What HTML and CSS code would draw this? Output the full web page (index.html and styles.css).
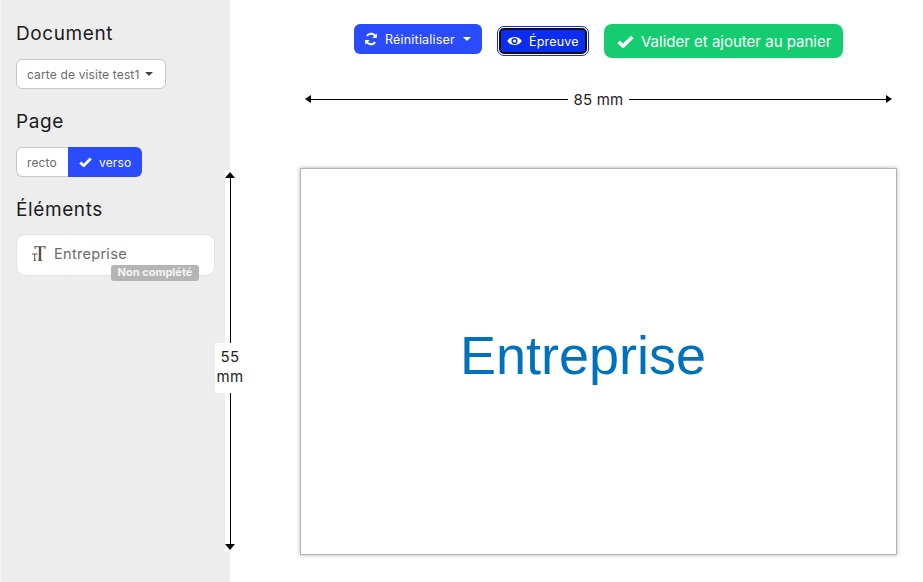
FILE: index.html
```html
<!DOCTYPE html>
<html lang="fr">
<head>
<meta charset="utf-8">
<title>Éditeur</title>
<link rel="stylesheet" href="styles.css">
</head>
<body>
<div class="app">
  <aside class="sidebar">
    <h2 class="heading">Document</h2>
    <button class="select">carte de visite test1<span class="caret caret-dark"></span></button>
    <h2 class="heading">Page</h2>
    <div class="segment">
      <span class="seg-item">recto</span>
      <span class="seg-item seg-active">
        <svg class="ico-check-sm" viewBox="0 0 16 12"><path d="M1.500 6.500 L5.800 10.500 L14.500 1.800" fill="none" stroke="#fff" stroke-width="3.400"/></svg>
        verso
      </span>
    </div>
    <h2 class="heading">Éléments</h2>
    <div class="element-card">
      <svg class="ico-text" viewBox="0 0 14 15">
        <path d="M2.500 0.700 H13.500 M3 0.500 V3 M13 0.500 V3 M6 14.400 H10" fill="none" stroke="#5a5044" stroke-width="1"/>
        <path d="M8 1 V14" stroke="#5a5044" stroke-width="2.400"/>
        <path d="M0 8 H5.500 M2.700 8 V14 M1.500 14.400 H4" fill="none" stroke="#5a5044" stroke-width="1"/>
      </svg>
      <span class="element-name">Entreprise</span>
      <span class="badge">Non complété</span>
    </div>
  </aside>

  <main class="workspace">
    <div class="toolbar">
      <button class="btn btn-blue">
        <svg class="ico-sync" viewBox="0 0 16 16"><path d="M13.500 6.200 A5.800 5.800 0 0 0 3.200 4.400 M2.500 9.800 A5.800 5.800 0 0 0 12.800 11.600" fill="none" stroke="#fff" stroke-width="2.200"/><path d="M14.600 1.400 V6.800 H9.400 Z M1.400 14.600 V9.200 H6.600 Z" fill="#fff"/></svg>
        Réinitialiser<span class="caret caret-light"></span>
      </button>
      <button class="btn btn-proof">
        <svg class="ico-eye" viewBox="0 0 16 12"><path d="M0.300 6 C3 0.400 13 0.400 15.700 6 C13 11.600 3 11.600 0.300 6 Z" fill="#fff"/><circle cx="8" cy="6" r="3.300" fill="#0a2df0"/><circle cx="8" cy="6" r="1.700" fill="#fff"/></svg>
        Épreuve
      </button>
      <button class="btn btn-green">
        <svg class="ico-check" viewBox="0 0 16 12"><path d="M1.500 6.300 L5.800 10.300 L14.500 1.800" fill="none" stroke="#fff" stroke-width="3.400"/></svg>
        Valider et ajouter au panier
      </button>
    </div>

    <div class="ruler-h">
      <span class="arrow-left"></span>
      <span class="line-h"></span>
      <span class="ruler-h-label">85 mm</span>
      <span class="line-h"></span>
      <span class="arrow-right"></span>
    </div>

    <div class="canvas-wrap">
      <div class="card"><span class="card-text">Entreprise</span></div>
    </div>
  </main>

  <div class="ruler-v">
    <span class="arrow-up"></span>
    <span class="line-v line-v-top"></span>
    <span class="ruler-v-label">55 mm</span>
    <span class="line-v"></span>
    <span class="arrow-down"></span>
  </div>
</div>
</body>
</html>
```
FILE: styles.css
```css
* { box-sizing: border-box; }
html, body { margin: 0; padding: 0; height: 100%; background: #fff; overflow: hidden; }
body { font-family: Inter, "Open Sans", sans-serif; color: #1a1a1a; }
.app { display: flex; height: 582px; position: relative; }

.sidebar {
  width: 230px;
  flex: none;
  background: #ededed;
  border-left: 1px solid #f4f4f4;
  padding: 23px 15px 0;
  display: flex;
  flex-direction: column;
  align-items: flex-start;
}
.heading { margin: 0; font-size: 19px; line-height: 22px; font-weight: 400; color: #1c1c1c; letter-spacing: 0.6px; }
.select {
  margin-top: 14px;
  margin-bottom: 22px;
  width: 150px;
  height: 30px;
  padding: 0 10px;
  background: #fff;
  border: 1px solid #c8c8c8;
  border-radius: 6px;
  font: 12px Inter, sans-serif;
  letter-spacing: 0.15px;
  color: #6b6b6b;
  display: flex;
  align-items: center;
  white-space: nowrap;
}
.caret { display: inline-block; width: 0; height: 0; border-left: 4px solid transparent; border-right: 4px solid transparent; border-top: 4px solid; }
.caret-dark { color: #444; margin-left: 6px; }
.caret-light { color: #fff; margin-left: 1px; }

.segment { margin-top: 14px; margin-bottom: 22px; display: flex; height: 30px; font-size: 12px; letter-spacing: 0.15px; }
.seg-item { display: flex; align-items: center; background: #fff; color: #6b6b6b; border: 1px solid #c8c8c8; border-right: 0; border-radius: 6px 0 0 6px; padding: 0 10px; width: 52px; }
.seg-active { background: #2b4bff; color: #fff; border: 0; border-radius: 0 6px 6px 0; width: 74px; padding: 0 0 0 11px; gap: 7px; }
.ico-check-sm { width: 13px; height: 10px; }

.element-card {
  margin-top: 13px;
  position: relative;
  width: 199px;
  height: 42px;
  background: #fff;
  border: 1px solid #e2e2e2;
  border-radius: 9px;
  display: flex;
  align-items: center;
  padding: 0 0 3px 15px;
  gap: 8px;
}
.ico-text { width: 14px; height: 15px; }
.element-name { font-size: 14.500px; color: #6b6b6b; letter-spacing: 0.3px; }
.badge {
  position: absolute;
  left: 94px;
  top: 30px;
  width: 88px;
  height: 16px;
  background: #b5b5b5;
  color: #f4f4f4;
  border-radius: 3px;
  font-size: 11px;
  font-weight: 700;
  line-height: 15px;
  text-align: center;
  white-space: nowrap;
}

.workspace { flex: 1; display: flex; flex-direction: column; align-items: center; padding: 24px 0 0 44px; min-width: 0; }
.toolbar { display: flex; gap: 15px; align-items: flex-start; height: 34px; }
.btn { display: flex; align-items: center; border: 0; color: #fff; font-family: Inter, sans-serif; white-space: nowrap; padding: 0; }
.btn-blue { width: 128px; height: 30px; background: #2b4bff; border-radius: 6px; font-size: 12.500px; letter-spacing: 0.2px; padding-left: 10px; gap: 7px; }
.btn-proof {
  width: 88px;
  height: 26px;
  margin: 4px 2px 0;
  background: #0a2df0;
  border-radius: 5px;
  font-size: 12.500px;
  letter-spacing: 0.2px;
  padding-left: 6px;
  gap: 7px;
  border: 2px solid #111;
  outline: 1px solid #0a2df0;
  outline-offset: 1px;
}
.btn-green { width: 239px; height: 34px; background: #16cc70; border-radius: 8px; font-size: 15px; padding-left: 13px; gap: 7px; }
.ico-sync { width: 14px; height: 14px; }
.ico-eye { width: 15px; height: 12px; }
.ico-check { width: 17px; height: 13px; }

.ruler-h { margin-top: 31px; width: 587px; height: 20px; display: flex; align-items: center; }
.line-h { flex: 1; height: 1px; background: #000; }
.ruler-h-label { font-size: 15px; letter-spacing: 0.2px; padding: 0 6px; color: #222; }
.arrow-left { border-top: 4px solid transparent; border-bottom: 4px solid transparent; border-right: 6px solid #000; }
.arrow-right { border-top: 4px solid transparent; border-bottom: 4px solid transparent; border-left: 6px solid #000; }

.canvas-wrap { margin-top: 59px; }
.card {
  width: 597px;
  height: 387px;
  background: #fff;
  border: 1px solid #b4b4b4;
  box-shadow: 0 0 4px #b0b0b0;
  display: flex;
  align-items: center;
  justify-content: center;
}
.card-text { font-family: "Liberation Sans", Arial, sans-serif; font-size: 54px; color: #0071bc; margin-left: -31px; margin-top: -14px; }

.ruler-v {
  position: absolute;
  left: 225px;
  top: 171px;
  width: 10px;
  height: 381px;
  padding: 1px 0 2px;
  background: #fff;
  display: flex;
  flex-direction: column;
  align-items: center;
}
.line-v { flex: 1; width: 1px; background: #000; }
.line-v-top { flex: none; height: 165px; }
.ruler-v-label { flex: none; width: 30px; height: 50px; background: #fff; font-size: 15px; letter-spacing: 0.4px; line-height: 20px; text-align: center; padding-top: 4px; color: #222; }
.arrow-up { border-left: 5px solid transparent; border-right: 5px solid transparent; border-bottom: 6px solid #000; }
.arrow-down { border-left: 5px solid transparent; border-right: 5px solid transparent; border-top: 6px solid #000; }
```
